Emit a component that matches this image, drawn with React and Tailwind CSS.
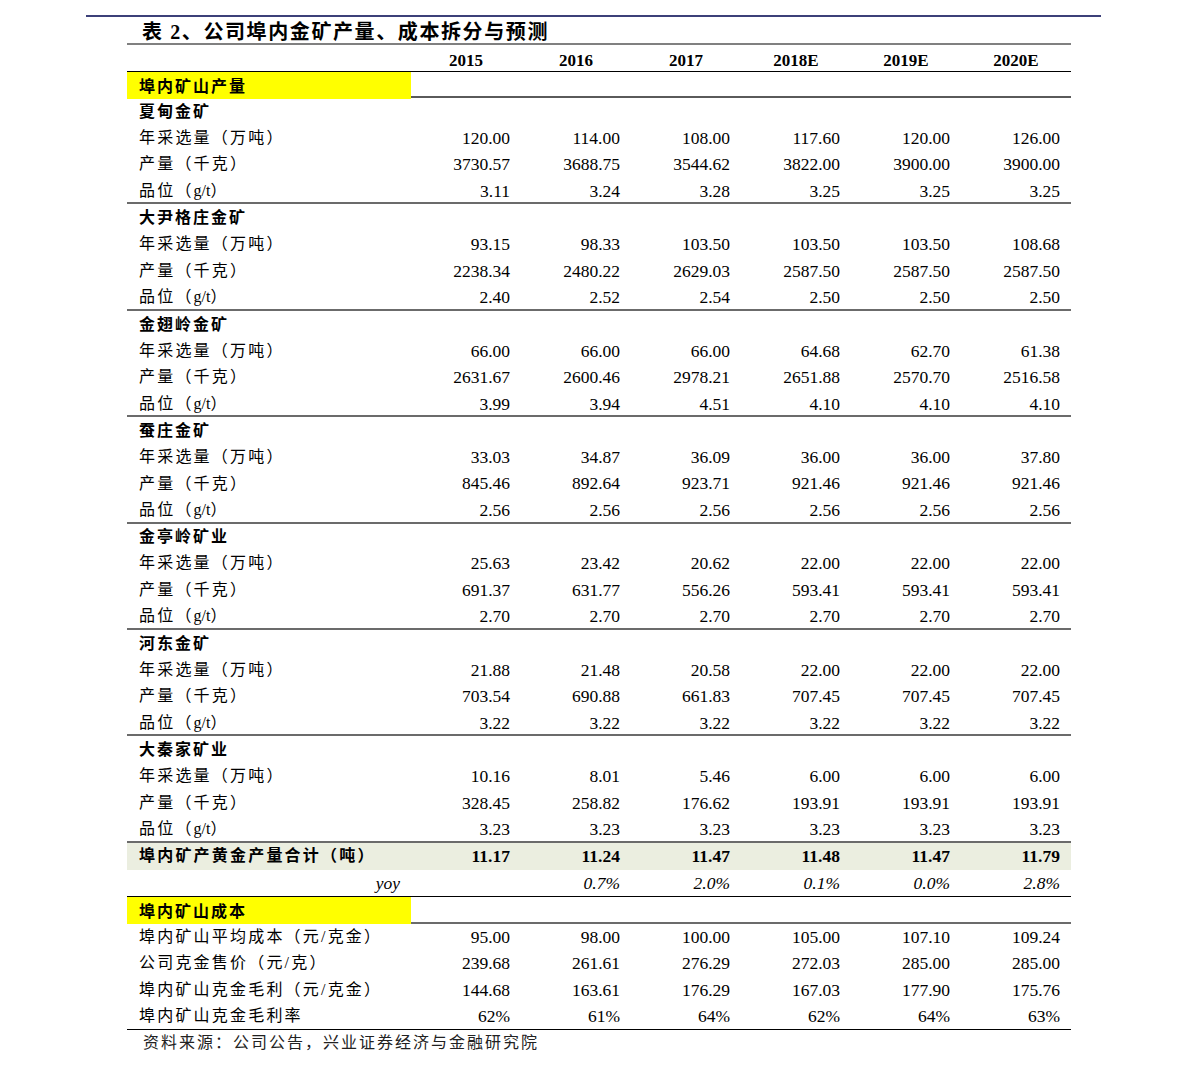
const years = ["2015", "2016", "2017", "2018E", "2019E", "2020E"];

const mines = [
  {
    name: "夏甸金矿",
    rows: [
      ["120.00", "114.00", "108.00", "117.60", "120.00", "126.00"],
      ["3730.57", "3688.75", "3544.62", "3822.00", "3900.00", "3900.00"],
      ["3.11", "3.24", "3.28", "3.25", "3.25", "3.25"],
    ],
  },
  {
    name: "大尹格庄金矿",
    rows: [
      ["93.15", "98.33", "103.50", "103.50", "103.50", "108.68"],
      ["2238.34", "2480.22", "2629.03", "2587.50", "2587.50", "2587.50"],
      ["2.40", "2.52", "2.54", "2.50", "2.50", "2.50"],
    ],
  },
  {
    name: "金翅岭金矿",
    rows: [
      ["66.00", "66.00", "66.00", "64.68", "62.70", "61.38"],
      ["2631.67", "2600.46", "2978.21", "2651.88", "2570.70", "2516.58"],
      ["3.99", "3.94", "4.51", "4.10", "4.10", "4.10"],
    ],
  },
  {
    name: "蚕庄金矿",
    rows: [
      ["33.03", "34.87", "36.09", "36.00", "36.00", "37.80"],
      ["845.46", "892.64", "923.71", "921.46", "921.46", "921.46"],
      ["2.56", "2.56", "2.56", "2.56", "2.56", "2.56"],
    ],
  },
  {
    name: "金亭岭矿业",
    rows: [
      ["25.63", "23.42", "20.62", "22.00", "22.00", "22.00"],
      ["691.37", "631.77", "556.26", "593.41", "593.41", "593.41"],
      ["2.70", "2.70", "2.70", "2.70", "2.70", "2.70"],
    ],
  },
  {
    name: "河东金矿",
    rows: [
      ["21.88", "21.48", "20.58", "22.00", "22.00", "22.00"],
      ["703.54", "690.88", "661.83", "707.45", "707.45", "707.45"],
      ["3.22", "3.22", "3.22", "3.22", "3.22", "3.22"],
    ],
  },
  {
    name: "大秦家矿业",
    rows: [
      ["10.16", "8.01", "5.46", "6.00", "6.00", "6.00"],
      ["328.45", "258.82", "176.62", "193.91", "193.91", "193.91"],
      ["3.23", "3.23", "3.23", "3.23", "3.23", "3.23"],
    ],
  },
];

const mineLabels = [
  "年采选量（万吨）",
  "产量（千克）",
  <>
    品位（<span className="tracking-normal">g/t</span>）
  </>,
];

const total = ["11.17", "11.24", "11.47", "11.48", "11.47", "11.79"];
const yoy = ["", "0.7%", "2.0%", "0.1%", "0.0%", "2.8%"];

const costs = [
  ["埠内矿山平均成本（元/克金）", ["95.00", "98.00", "100.00", "105.00", "107.10", "109.24"]],
  ["公司克金售价（元/克）", ["239.68", "261.61", "276.29", "272.03", "285.00", "285.00"]],
  ["埠内矿山克金毛利（元/克金）", ["144.68", "163.61", "176.29", "167.03", "177.90", "175.76"]],
  ["埠内矿山克金毛利率", ["62%", "61%", "64%", "62%", "64%", "63%"]],
];

const grid = "grid grid-cols-[284px_repeat(6,110px)] items-center";
const label = "pl-[12px] text-[16px] tracking-[2.2px] text-black whitespace-nowrap";
const num = "pr-[11px] text-right text-[17.5px] text-black";

const Row = ({ name, values, className = "", bold = false }) => (
  <div className={`${grid} ${className}`}>
    <div className={`${label} ${bold ? "font-bold" : ""}`}>{name}</div>
    {values.map((v, i) => (
      <div key={i} className={`${num} ${bold ? "font-bold" : ""}`}>
        {v}
      </div>
    ))}
  </div>
);

const YellowRow = ({ name, className = "" }) => (
  <div className={`${grid} ${className}`}>
    <div className="h-full flex items-center pt-[3px] bg-[#ffff00] pl-[12px] text-[16px] tracking-[2px] font-bold text-black">
      {name}
    </div>
  </div>
);

export default function App() {
  return (
    <div
      className="w-[1191px] h-[1074px] bg-white pt-[15px]"
      style={{ fontFamily: '"Liberation Serif", "Noto Sans CJK SC", serif' }}
    >
      <div className="ml-[86px] w-[1015px] h-[2px] bg-[#3c4079]" />

      <div className="ml-[127px] w-[944px]">
        {/* title */}
        <div className="h-[26px] flex items-center pt-[4px] pl-[15px] text-[20px] font-bold text-black tracking-[1.6px] whitespace-nowrap">
          表 2、公司埠内金矿产量、成本拆分与预测
        </div>

        {/* header */}
        <div className={`${grid} h-[29px] pt-[3px] border-t-2 border-b border-t-[#808080] border-b-black`}>
          <div />
          {years.map((y) => (
            <div key={y} className="text-center text-[17px] font-bold text-black">
              {y}
            </div>
          ))}
        </div>

        <YellowRow name="埠内矿山产量" className="h-[26px] border-b-2 border-[#5a5a5a]" />

        {mines.map((m) => (
          <div key={m.name} className="border-b-2 border-[#6b6b6b]">
            <div className={`${grid} h-[26.6px] pt-[1px]`}>
              <div className={`${label} tracking-[2px] font-bold`}>{m.name}</div>
            </div>
            {m.rows.map((vals, i) => (
              <Row
                key={i}
                name={mineLabels[i]}
                values={vals}
                className={i === 2 ? "h-[24.6px]" : "h-[26.6px]"}
              />
            ))}
          </div>
        ))}

        <Row name="埠内矿产黄金产量合计（吨）" values={total} bold className="h-[27px] bg-[#ebeee0]" />

        <div className={`${grid} h-[27px] border-b border-black`}>
          <div className="pr-[11px] text-right text-[17.5px] italic text-black">yoy</div>
          {yoy.map((v, i) => (
            <div key={i} className={`${num} italic`}>
              {v}
            </div>
          ))}
        </div>

        <YellowRow name="埠内矿山成本" className="h-[27px] border-b-2 border-[#6b6b6b]" />

        <div className="border-b border-black">
          {costs.map(([n, vals], i) => (
            <Row key={n} name={n} values={vals} className={i === 3 ? "h-[25.5px]" : "h-[26.5px]"} />
          ))}
        </div>

        <div className="h-[26px] flex items-center pl-[16px] text-[16px] tracking-[2px] text-[#222]">
          资料来源：公司公告，兴业证券经济与金融研究院
        </div>
      </div>
    </div>
  );
}
